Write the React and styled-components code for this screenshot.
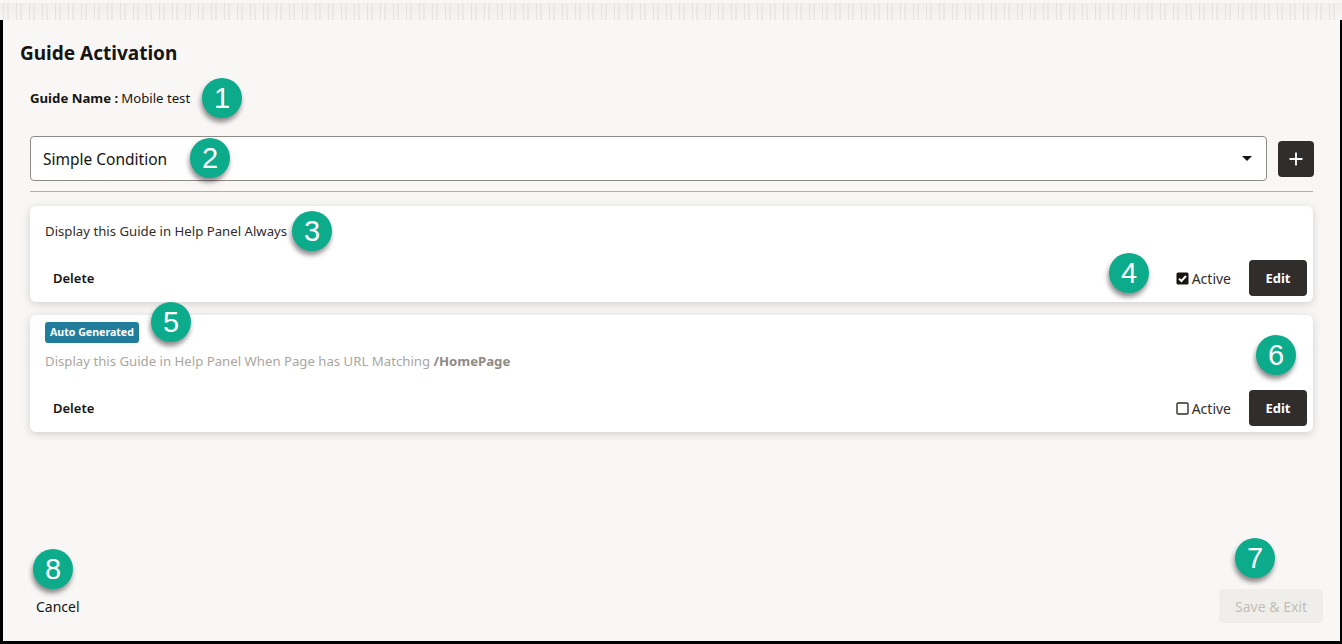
import React from "react";
import styled, { createGlobalStyle } from "styled-components";

const GlobalStyle = createGlobalStyle`
  body {
    margin: 0;
    font-family: "Noto Sans", Lato, sans-serif;
    color: #161513;
  }
`;

const Screen = styled.div`
  position: relative;
  width: 1342px;
  height: 644px;
  display: flex;
  flex-direction: column;
  background: #f8f7f5;
  overflow: hidden;
`;

const PatternBand = styled.div`
  height: 17px;
  margin-top: 3px;
  background:
    repeating-linear-gradient(
      90deg,
      rgba(255, 255, 255, 0) 0 3px,
      #e4e2df 3px 4px,
      rgba(255, 255, 255, 0) 4px 7px,
      #ebe9e6 7px 9px,
      rgba(255, 255, 255, 0) 9px 13px
    ),
    linear-gradient(#f0efed, #f6f5f3);
`;

const Frame = styled.div`
  flex: 1;
  display: flex;
  flex-direction: column;
  border-left: 3px solid #000;
  border-right: 2px solid #000;
  border-bottom: 3px solid #000;
`;

const Title = styled.h1`
  margin: 21px 0 0 17px;
  font-size: 19px;
  line-height: 24px;
  font-weight: 700;
  color: #161513;
`;

const Content = styled.div`
  flex: 1;
  padding: 0 27px;
`;

const GuideName = styled.div`
  margin-top: 23px;
  font-size: 13.2px;
  line-height: 20px;
  color: #161513;

  b {
    font-weight: 700;
    margin-right: 3px;
  }
`;

const SelectRow = styled.div`
  display: flex;
  align-items: center;
  gap: 11px;
  margin: 28px -1px 0 0;
`;

const Select = styled.div`
  flex: 1;
  height: 45px;
  box-sizing: border-box;
  display: flex;
  align-items: center;
  justify-content: space-between;
  padding: 0 14px 0 12px;
  background: #fff;
  border: 1px solid #8f8a85;
  border-radius: 4px;
  font-size: 15.5px;
  color: #161513;
`;

const Caret = styled.span`
  width: 0;
  height: 0;
  border-left: 5px solid transparent;
  border-right: 5px solid transparent;
  border-top: 5px solid #161513;
`;

const DarkButton = styled.button`
  display: flex;
  align-items: center;
  justify-content: center;
  height: 36px;
  width: ${(p) => p.$width || 36}px;
  border: none;
  border-radius: 4px;
  background: #312d2a;
  color: #fff;
  font-family: inherit;
  font-size: 13px;
  font-weight: 700;
  cursor: pointer;
`;

const Divider = styled.hr`
  margin: 10px 0 0;
  border: none;
  height: 1px;
  background: #b3afaa;
`;

const CardList = styled.div`
  display: flex;
  flex-direction: column;
  gap: 13px;
  margin-top: 14px;
`;

const Card = styled.div`
  display: flex;
  flex-direction: column;
  align-items: flex-start;
  padding: ${(p) => (p.$badge ? 7 : 15)}px 6px 6px 15px;
  background: #fff;
  border-radius: 6px;
  box-shadow: 0 2px 8px rgba(0, 0, 0, 0.16);
`;

const Badge = styled.span`
  display: inline-block;
  height: 21px;
  line-height: 21px;
  padding: 0 5px;
  border-radius: 3px;
  background: #227c9c;
  color: #fff;
  font-size: 10.6px;
  font-weight: 700;
`;

const RuleText = styled.div`
  margin-top: ${(p) => (p.$muted ? 8 : 0)}px;
  font-size: 13.2px;
  line-height: 20px;
  color: ${(p) => (p.$muted ? "#aaa6a1" : "#312d2a")};

  b {
    color: #8e8a85;
    font-weight: 700;
  }
`;

const CardActions = styled.div`
  align-self: stretch;
  display: flex;
  align-items: center;
  margin-top: 19px;
`;

const TextButton = styled.button`
  height: 36px;
  padding: 0 ${(p) => p.$pad || 8}px;
  border: none;
  background: transparent;
  color: #161513;
  font-family: inherit;
  font-size: ${(p) => p.$size || 13}px;
  font-weight: ${(p) => p.$weight || 600};
  cursor: pointer;
`;

const Spacer = styled.div`
  flex: 1;
`;

const CheckLabel = styled.label`
  display: flex;
  align-items: center;
  gap: 3px;
  margin-right: 18px;
  font-size: 14px;
  color: #312d2a;

  svg {
    margin-top: 1px;
  }
`;

const Footer = styled.div`
  display: flex;
  align-items: center;
  justify-content: space-between;
  padding: 0 17px 17px;
`;

const SaveButton = styled.button`
  height: 34px;
  padding: 0 16px;
  border: none;
  border-radius: 4px;
  background: #f0eeeb;
  color: #c2beb9;
  font-family: inherit;
  font-size: 14px;
  cursor: default;
`;

const Callout = styled.div`
  position: absolute;
  left: ${(p) => p.$x - 20}px;
  top: ${(p) => p.$y - 20}px;
  width: 40px;
  height: 40px;
  border-radius: 50%;
  background: #0cab8c;
  box-shadow: -1px 4px 5px rgba(0, 0, 0, 0.45);
  display: flex;
  align-items: center;
  justify-content: center;
  color: #fff;
  font-family: "Liberation Sans", Arial, sans-serif;
  font-size: 29px;
  line-height: 1;
`;

const Checkbox = ({ checked }) =>
  checked ? (
    <svg width="13" height="13" viewBox="0 0 13 13">
      <rect x="0.5" y="0.5" width="12" height="12" rx="1.5" fill="#161513" />
      <path d="M3 6.6 L5.4 9 L10 4" stroke="#fff" strokeWidth="2" fill="none" />
    </svg>
  ) : (
    <svg width="13" height="13" viewBox="0 0 13 13">
      <rect x="1" y="1" width="11" height="11" rx="1" fill="#fff" stroke="#312d2a" strokeWidth="1.4" />
    </svg>
  );

const PlusIcon = () => (
  <svg width="14" height="14" viewBox="0 0 14 14">
    <path d="M7 0.5 V13.5 M0.5 7 H13.5" stroke="#fff" strokeWidth="1.8" />
  </svg>
);

const rules = [
  { id: 1, text: "Display this Guide in Help Panel Always", active: true },
  {
    id: 2,
    auto: true,
    text: "Display this Guide in Help Panel When Page has URL Matching",
    match: "/HomePage",
    active: false,
  },
];

const callouts = [
  [1, 222, 98],
  [2, 210, 158],
  [3, 312, 231],
  [4, 1129, 273],
  [5, 171, 322],
  [6, 1276, 355],
  [7, 1255, 558],
  [8, 53, 569],
];

export default function App() {
  return (
    <Screen>
      <GlobalStyle />
      <PatternBand />
      <Frame>
        <Title>Guide Activation</Title>
        <Content>
          <GuideName>
            <b>Guide Name :</b>Mobile test
          </GuideName>

          <SelectRow>
            <Select>
              Simple Condition
              <Caret />
            </Select>
            <DarkButton aria-label="Add">
              <PlusIcon />
            </DarkButton>
          </SelectRow>

          <Divider />

          <CardList>
            {rules.map((r) => (
              <Card key={r.id} $badge={r.auto}>
                {r.auto && <Badge>Auto Generated</Badge>}
                <RuleText $muted={r.auto}>
                  {r.text}
                  {r.match && <b> {r.match}</b>}
                </RuleText>
                <CardActions>
                  <TextButton>Delete</TextButton>
                  <Spacer />
                  <CheckLabel>
                    <Checkbox checked={r.active} />
                    Active
                  </CheckLabel>
                  <DarkButton $width={58}>Edit</DarkButton>
                </CardActions>
              </Card>
            ))}
          </CardList>
        </Content>

        <Footer>
          <TextButton $pad={16} $weight={400} $size={14}>
            Cancel
          </TextButton>
          <SaveButton disabled>Save &amp; Exit</SaveButton>
        </Footer>
      </Frame>

      {callouts.map(([n, x, y]) => (
        <Callout key={n} $x={x} $y={y}>
          {n}
        </Callout>
      ))}
    </Screen>
  );
}
